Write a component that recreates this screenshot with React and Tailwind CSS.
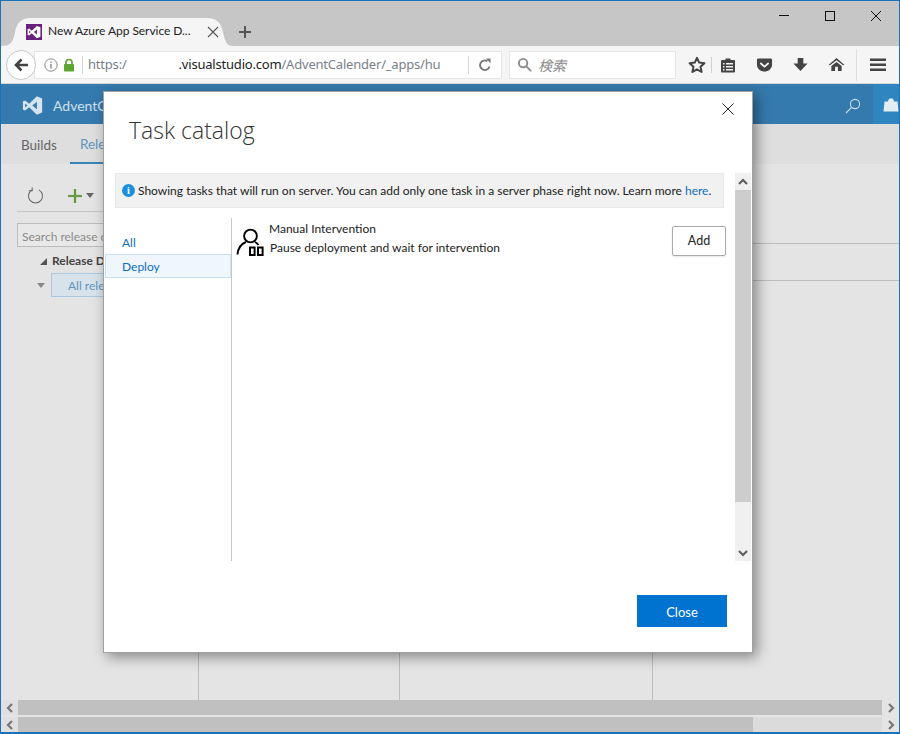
import React from "react";

function Chevron({ dir = "up", className = "" }) {
  const d = {
    up: "M1 7 L5 3 L9 7",
    down: "M1 3 L5 7 L9 3",
    left: "M7 1 L3 5 L7 9",
    right: "M3 1 L7 5 L3 9",
  }[dir];
  return (
    <svg viewBox="0 0 10 10" className={`w-[10px] h-[10px] ${className}`} fill="none" stroke="currentColor" strokeWidth="2.2">
      <path d={d} />
    </svg>
  );
}

function VsLogo({ className = "", fill = "white" }) {
  return (
    <svg viewBox="0 0 24 24" className={className}>
      <path
        fill={fill}
        fillRule="evenodd"
        d="M17 1.5 L23 4 V20 L17 22.5 L8.2 14 L3.5 17.8 L1 16.6 V7.4 L3.5 6.2 L8.2 10 Z M17 7.6 L11.8 12 L17 16.4 Z M3.6 9.6 V14.4 L6.2 12 Z"
      />
    </svg>
  );
}

function TitleBar() {
  return (
    <div className="h-[45px] bg-[#c6c6c6] flex items-end relative shrink-0">
      <div className="relative w-[232px] h-[28px] flex items-center pl-[25px] pr-[14px]">
        <svg viewBox="0 0 232 28" className="absolute inset-0 w-[232px] h-[28px]" preserveAspectRatio="none">
          <path d="M0 28 C 10 28 12 24 14 14 C 16 5 20 0 30 0 H 206 C 216 0 220 5 222 14 C 224 24 226 28 232 28 Z" fill="#f5f5f5" />
        </svg>
        <span className="relative w-[16px] h-[16px] bg-[#68217a] flex items-center justify-center shrink-0">
          <VsLogo className="w-[14px] h-[14px]" />
        </span>
        <span className="relative ml-[6px] -mt-[2px] w-[152px] text-[12px] tracking-[-0.05px] leading-none whitespace-nowrap text-[#222] font-['Lato',sans-serif]">
          New Azure App Service D...
        </span>
        <svg viewBox="0 0 12 12" className="relative ml-[7px] w-[12px] h-[12px]" stroke="#555" strokeWidth="1.1">
          <path d="M1 1 L11 11 M11 1 L1 11" />
        </svg>
      </div>
      <svg viewBox="0 0 14 14" className="w-[14px] h-[14px] ml-[5px] mb-[7px]" stroke="#555" strokeWidth="2">
        <path d="M7 1 V13 M1 7 H13" />
      </svg>
      <svg viewBox="0 0 12 12" className="absolute left-[777px] top-[9px] w-[12px] h-[12px]" stroke="#111" strokeWidth="1">
        <path d="M1 5.5 H11" />
      </svg>
      <svg viewBox="0 0 12 12" className="absolute left-[823px] top-[9px] w-[12px] h-[12px]" stroke="#111" strokeWidth="1" fill="none">
        <rect x="1.5" y="1.5" width="9" height="9" />
      </svg>
      <svg viewBox="0 0 12 12" className="absolute left-[869px] top-[9px] w-[12px] h-[12px]" stroke="#111" strokeWidth="1">
        <path d="M1 1 L11 11 M11 1 L1 11" />
      </svg>
    </div>
  );
}

function ToolBar() {
  return (
    <div className="h-[38px] bg-[#f5f5f5] flex items-center border-b border-[#d8d8d8] shrink-0 relative">
      <div className="ml-[5px] w-[30px] h-[30px] rounded-full bg-white border border-[#c8c8c8] flex items-center justify-center relative z-10 shrink-0">
        <svg viewBox="0 0 16 16" className="w-[16px] h-[16px]" fill="none" stroke="#444" strokeWidth="2.6">
          <path d="M8.5 2.5 L3 8 L8.5 13.5 M3.5 8 H15" />
        </svg>
      </div>
      <div className="-ml-[2px] w-[468px] h-[28px] bg-white border border-[#e6e6e6] flex items-center shrink-0 pl-[9px]">
        <svg viewBox="0 0 14 14" className="w-[14px] h-[14px] shrink-0" fill="none" stroke="#8a8a8a" strokeWidth="1">
          <circle cx="7" cy="7" r="6.2" />
          <path d="M7 6 V10.5 M7 3.4 V5" strokeWidth="1.4" />
        </svg>
        <svg viewBox="0 0 12 14" className="ml-[5px] w-[12px] h-[14px] shrink-0">
          <path d="M3 6 V4.2 C3 0.6 9 0.6 9 4.2 V6" fill="none" stroke="#5da52f" strokeWidth="1.7" />
          <rect x="1" y="6" width="10" height="7.5" rx="0.8" fill="#5da52f" />
        </svg>
        <span className="ml-[7px] w-px h-[18px] bg-[#d5d5d5] shrink-0"></span>
        <span className="ml-[5px] w-[378px] whitespace-nowrap text-[13px] leading-none text-[#7a7f8a] font-['Noto_Sans',sans-serif] tracking-[-0.2px]">
          https:/<span className="inline-block w-[52px]"></span><span className="text-[#222]">.visualstudio.com</span>/AdventCalender/_apps/hu
        </span>
        <span className="ml-[2px] w-px h-[18px] bg-[#d5d5d5] shrink-0"></span>
        <svg viewBox="0 0 14 14" className="ml-[9px] w-[14px] h-[14px] shrink-0" fill="none" stroke="#777" strokeWidth="1.9">
          <path d="M11.5 8.5 A4.8 4.8 0 1 1 9.5 3.2" />
          <path d="M8 0.5 H12.5 V5.5 Z" fill="#777" stroke="none" />
        </svg>
      </div>
      <div className="ml-[7px] w-[167px] h-[28px] bg-white border border-[#e6e6e6] flex items-center pl-[7px] shrink-0">
        <svg viewBox="0 0 16 16" className="w-[15px] h-[15px]" fill="none" stroke="#8a8a8a" strokeWidth="2">
          <circle cx="6.5" cy="6.5" r="4.5" />
          <path d="M10 10 L15 15" />
        </svg>
        <span className="ml-[6px] italic text-[14px] leading-none text-[#8a8a8a] font-['Noto_Sans_CJK_JP',sans-serif]">検索</span>
      </div>
      <svg viewBox="0 0 18 18" className="ml-[12px] w-[18px] h-[18px] shrink-0" fill="none" stroke="#444" strokeWidth="2">
        <path d="M9 1.8 L11.2 6.6 L16.4 7.2 L12.5 10.8 L13.6 16 L9 13.4 L4.4 16 L5.5 10.8 L1.6 7.2 L6.8 6.6 Z" strokeLinejoin="round" />
      </svg>
      <span className="ml-[5px] w-px h-[16px] bg-[#cfcfcf] shrink-0"></span>
      <svg viewBox="0 0 16 16" className="ml-[8px] w-[16px] h-[16px] shrink-0">
        <path fill="#444" fillRule="evenodd" d="M2 3 H5.5 V1.5 H10.5 V3 H14 Q15 3 15 4 V14.5 Q15 15.5 14 15.5 H2 Q1 15.5 1 14.5 V4 Q1 3 2 3 Z M3 6 V7.5 H4.5 V6 Z M6 6 V7.5 H13 V6 Z M3 9 V10.5 H4.5 V9 Z M6 9 V10.5 H13 V9 Z M3 12 V13.5 H4.5 V12 Z M6 12 V13.5 H13 V12 Z" />
      </svg>
      <svg viewBox="0 0 18 16" className="ml-[20px] w-[17px] h-[16px] shrink-0">
        <path fill="#444" fillRule="evenodd" d="M2.5 1 H15.5 Q17 1 17 2.5 V7.5 C17 12 13 15 9 15 C5 15 1 12 1 7.5 V2.5 Q1 1 2.5 1 Z M5.2 5.2 L4 6.6 L9 11 L14 6.6 L12.8 5.2 L9 8.4 Z" />
      </svg>
      <svg viewBox="0 0 16 16" className="ml-[20px] w-[15px] h-[15px] shrink-0">
        <path fill="#444" d="M5 1 H11 V7 H15.5 L8 15 L0.5 7 H5 Z" />
      </svg>
      <svg viewBox="0 0 18 16" className="ml-[20px] w-[17px] h-[15px] shrink-0">
        <path fill="#444" d="M9 1 L17.5 8.5 L16 8.8 L9 3.5 L2 8.8 L0.5 8.5 Z M3.5 9.5 L9 5.2 L14.5 9.5 V15 H10.5 V10.5 H7.5 V15 H3.5 Z" />
      </svg>
      <span className="ml-[11px] w-px h-[32px] bg-[#e0e0e0] shrink-0"></span>
      <svg viewBox="0 0 16 14" className="ml-[13px] w-[16px] h-[14px] shrink-0">
        <path fill="#444" d="M0 0.5 H16 V3 H0 Z M0 5.5 H16 V8 H0 Z M0 10.5 H16 V13 H0 Z" />
      </svg>
    </div>
  );
}

function AppHeader() {
  return (
    <div className="h-[40px] bg-[#357aae] flex items-center shrink-0 font-['Lato',sans-serif]">
      <div className="flex items-center pt-[3px]">
        <VsLogo className="ml-[21px] w-[21px] h-[21px]" fill="#d5e4ef" />
        <span className="ml-[10px] text-[14px] text-[#cfe0ec]">AdventC</span>
      </div>
      <div className="ml-auto flex items-center h-full">
        <svg viewBox="0 0 16 16" className="w-[16px] h-[16px] mr-[12px] mt-[4px]" fill="none" stroke="#cfe0ec" strokeWidth="1.1">
          <circle cx="10" cy="6" r="4.6" />
          <path d="M6.6 9.4 L1 15" />
        </svg>
        <div className="w-[26px] h-full bg-[#2f85c0] flex items-center pl-[10px] overflow-hidden">
          <svg viewBox="0 0 16 15" className="w-[16px] h-[15px] shrink-0">
            <path fill="#e3edf4" d="M1.5 4.5 H5 C5 0 11 0 11 4.5 H14.5 L15.5 14.5 H0.5 Z" />
          </svg>
        </div>
      </div>
    </div>
  );
}

function NavTabs() {
  return (
    <div className="h-[40px] bg-[#dedede] flex shrink-0 text-[13.5px] font-['Lato',sans-serif]">
      <span className="ml-[20px] self-center mt-[3px] text-[#666]">Builds</span>
      <span className="ml-[13px] w-[40px] pl-[10px] pt-[3px] flex items-center border-b-2 border-[#3a84bc] text-[#5f95bf]">Rele</span>
    </div>
  );
}

function Sidebar() {
  return (
    <div className="w-[198px] border-r border-[#bdbdbd] shrink-0 overflow-hidden pl-[16px] font-['Lato',sans-serif]">
      <div className="h-[48px] flex items-center border-b border-[#c4c4c4] pl-[10px] pt-[16px]">
        <svg viewBox="0 0 18 18" className="w-[17px] h-[17px]" fill="none" stroke="#666" strokeWidth="1.1">
          <path d="M12.5 3 A7.4 7.4 0 1 1 5.5 3" />
          <path d="M5.5 0.5 V4 H2" />
        </svg>
        <svg viewBox="0 0 14 14" className="ml-[24px] w-[14px] h-[14px]" strokeWidth="2.2">
          <path d="M7 0 V14" stroke="#5f9a3b" />
          <path d="M0 7 H14" stroke="#6a9a4a" />
        </svg>
        <svg viewBox="0 0 8 5" className="ml-[4px] w-[8px] h-[5px]">
          <path d="M0 0 H8 L4 5 Z" fill="#666" />
        </svg>
      </div>
      <div className="mt-[11px] h-[24px] w-[170px] bg-[#e8e8e8] border border-[#bcbcbc] flex items-center pl-[4px] pt-[3px] text-[12px] text-[#8a8a8a] whitespace-nowrap">
        Search release d
      </div>
      <div className="mt-[2px] h-[24px] flex items-center pl-[23px] text-[12px] font-bold text-[#444] whitespace-nowrap">
        <svg viewBox="0 0 8 8" className="w-[7px] h-[7px] mr-[5px]">
          <path d="M8 0 V8 H0 Z" fill="#555" />
        </svg>
        Release D
      </div>
      <div className="flex items-center pl-[20px]">
        <svg viewBox="0 0 8 5" className="w-[8px] h-[5px]">
          <path d="M0 0 H8 L4 5 Z" fill="#888" />
        </svg>
        <div className="ml-[6px] h-[24px] w-[130px] bg-[#d8e2ea] border border-[#a9c8e4] flex items-center pl-[16px] pt-[2px] text-[12px] text-[#5f95bf] whitespace-nowrap">
          All rele
        </div>
      </div>
    </div>
  );
}

function Background() {
  return (
    <div className="flex-1 flex min-h-0 bg-[#e4e4e4]">
      <Sidebar />
      <div className="w-[201px] border-r border-[#bdbdbd] shrink-0"></div>
      <div className="w-[253px] border-r border-[#bdbdbd] shrink-0"></div>
      <div className="flex-1 pt-[79px]">
        <div className="h-px bg-[#bdbdbd]"></div>
        <div className="h-px mt-[36px] bg-[#bdbdbd]"></div>
      </div>
    </div>
  );
}

function HScrollBar({ thumbWidth }) {
  return (
    <div className="h-[15px] flex shrink-0 text-[#777]">
      <div className="w-[17px] bg-[#e0e0e0] flex items-center justify-center">
        <Chevron dir="left" />
      </div>
      <div className="flex-1 flex bg-[#dbdbdb]">
        <div className={thumbWidth}></div>
      </div>
      <div className="w-[17px] flex items-center justify-center">
        <Chevron dir="right" />
      </div>
    </div>
  );
}

function PersonIcon() {
  return (
    <svg viewBox="0 0 28 28" className="w-[28px] h-[28px] shrink-0" fill="none" stroke="#000">
      <circle cx="14.5" cy="8" r="6.4" strokeWidth="1.9" />
      <path d="M1.5 26.5 C 2 20 5 16 10 14 M19 14 C 20 14.5 21.5 15.5 22.5 17" strokeWidth="1.9" />
      <rect x="14" y="19.5" width="4.6" height="7.5" strokeWidth="2" />
      <rect x="22" y="19.5" width="4.6" height="7.5" strokeWidth="2" />
    </svg>
  );
}

function Modal() {
  return (
    <div className="absolute left-[102px] top-[90px] w-[650px] h-[562px] bg-white border border-[#a0a0a0] shadow-[4px_4px_13px_rgba(0,0,0,0.42)] flex flex-col font-['Lato',sans-serif] text-[#222]">
      <div className="h-[81px] shrink-0 flex pl-[25px] relative">
        <h1 className="mt-[21px] text-[23px] leading-[34px] font-light text-[#333] font-['Open_Sans',sans-serif]">Task catalog</h1>
        <svg viewBox="0 0 12 12" className="absolute right-[18px] top-[11px] w-[12px] h-[12px]" stroke="#222" strokeWidth="1">
          <path d="M0.5 0.5 L11.5 11.5 M11.5 0.5 L0.5 11.5" />
        </svg>
      </div>
      <div className="flex h-[388px] shrink-0">
        <div className="w-[609px] ml-[11px] shrink-0 flex flex-col">
          <div className="h-[35px] shrink-0 bg-[#f1f1f1] border border-[#e8e8e8] flex items-center pl-[6px] text-[12px] whitespace-nowrap">
            <span className="w-[13px] h-[13px] shrink-0 rounded-full bg-[#1c8fdc] text-white text-[10px] font-bold flex items-center justify-center leading-none font-['Liberation_Serif',serif]">i</span>
            <span className="ml-[3px] mt-[1px]">
              Showing tasks that will run on server. You can add only one task in a server phase right now. Learn more <span className="text-[#106ebe]">here</span>.
            </span>
          </div>
          <div className="flex flex-1 mt-[10px] -ml-[10px]">
            <div className="w-[127px] border-r border-[#c8c8c8] shrink-0 pt-[14px] text-[12px] text-[#106ebe]">
              <div className="h-[22px] pl-[17px] flex items-center">All</div>
              <div className="h-[24px] pl-[16px] pt-[2px] flex items-center bg-[#eff6fc] border border-[#c7e0f4]">Deploy</div>
            </div>
            <div className="flex-1 flex pl-[4px] pt-[1px]">
              <div className="pt-[9px]"><PersonIcon /></div>
              <div className="ml-[6px] text-[12px] leading-[19px]">
                <div className="-ml-px">Manual Intervention</div>
                <div>Pause deployment and wait for intervention</div>
              </div>
              <button className="ml-auto -mr-[2px] mt-[7px] w-[54px] h-[30px] bg-white border border-[#ababab] rounded-[2px] text-[12.5px] text-[#222] shadow-[0_1px_2px_rgba(0,0,0,0.1)]">Add</button>
            </div>
          </div>
        </div>
        <div className="ml-[11px] w-[16px] flex flex-col bg-[#f0f0f0] text-[#606060]">
          <div className="h-[17px] flex items-center justify-center shrink-0"><Chevron dir="up" /></div>
          <div className="h-[312px] bg-[#cdcdcd] shrink-0"></div>
          <div className="flex-1"></div>
          <div className="h-[17px] flex items-center justify-center shrink-0"><Chevron dir="down" /></div>
        </div>
      </div>
      <div className="flex justify-end pt-[34px] pr-[25px]">
        <button className="w-[90px] h-[32px] bg-[#0072d0] text-white text-[13px] pt-[3px]">Close</button>
      </div>
    </div>
  );
}

export default function App() {
  return (
    <div className="w-[900px] h-[734px] relative overflow-hidden border-x border-t border-b-2 border-[#1a72bb] flex flex-col bg-[#e4e4e4]">
      <TitleBar />
      <ToolBar />
      <AppHeader />
      <NavTabs />
      <Background />
      <HScrollBar thumbWidth="w-full bg-[#c0c0c0]" />
      <div className="h-[2px] bg-[#e4e4e4] shrink-0"></div>
      <HScrollBar thumbWidth="w-[735px] bg-[#c0c0c0]" />
      <Modal />
    </div>
  );
}
